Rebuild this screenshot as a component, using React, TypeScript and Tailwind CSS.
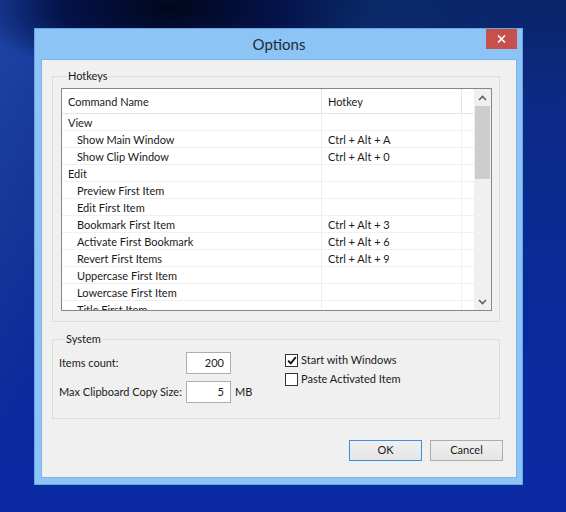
import React from "react";

const ROWS: { name: string; key?: string; group?: boolean }[] = [
  { name: "View", group: true },
  { name: "Show Main Window", key: "Ctrl + Alt + A" },
  { name: "Show Clip Window", key: "Ctrl + Alt + 0" },
  { name: "Edit", group: true },
  { name: "Preview First Item" },
  { name: "Edit First Item" },
  { name: "Bookmark First Item", key: "Ctrl + Alt + 3" },
  { name: "Activate First Bookmark", key: "Ctrl + Alt + 6" },
  { name: "Revert First Items", key: "Ctrl + Alt + 9" },
  { name: "Uppercase First Item" },
  { name: "Lowercase First Item" },
  { name: "Title First Item" },
];

function Chevron({ down }: { down?: boolean }) {
  return (
    <svg width="9" height="6" viewBox="0 0 9 6" className={down ? "rotate-180" : ""}>
      <path d="M1 5 L4.5 1.5 L8 5" fill="none" stroke="#606060" strokeWidth="1.6" />
    </svg>
  );
}

function Checkbox({ checked, label }: { checked?: boolean; label: string }) {
  return (
    <label className="flex items-center gap-[3px] h-[19px]">
      <span className="w-[13px] h-[13px] border border-[#333333] bg-white flex items-center justify-center">
        {checked && (
          <svg width="10" height="9" viewBox="0 0 10 9">
            <path d="M1.2 4.6 L3.8 7.4 L8.8 1.2" fill="none" stroke="#111" strokeWidth="1.9" />
          </svg>
        )}
      </span>
      <span>{label}</span>
    </label>
  );
}

export default function App() {
  return (
    <div
      className="w-[566px] h-[512px] overflow-hidden pt-[28px] pl-[34px] text-[11px] text-[#1a1a1a] bg-[radial-gradient(ellipse_200px_70px_at_170px_8px,#010719_0%,#04124a_55%,transparent_100%),radial-gradient(ellipse_180px_50px_at_340px_10px,#0a2a66_0%,transparent_100%),linear-gradient(120deg,#1d46a6_0%,#16389a_14%,transparent_30%),linear-gradient(180deg,#0a2468_0%,#0c2b88_22%,#0a2a9a_60%,#0b29a2_100%)]"
      style={{ fontFamily: "Lato, 'Noto Sans', sans-serif" }}
    >
      {/* window */}
      <div className="w-[489px] h-[457px] border border-[#69a6e4] bg-[#8cc4f6] flex flex-col pl-[6px] pr-[5px] pb-[6px]">
        <div className="relative h-[30px] flex items-center justify-center">
          <span className="text-[15px] text-[#1e2a38]">Options</span>
          <button className="absolute right-0 top-0 w-[31px] h-[20px] bg-[#c7504c] flex items-center justify-center">
            <svg width="9" height="8" viewBox="0 0 9 8">
              <path d="M1 0.5 L8 7.5 M8 0.5 L1 7.5" stroke="#fff" strokeWidth="1.6" />
            </svg>
          </button>
        </div>

        {/* client area */}
        <div className="flex-1 border border-[#7db4ea] bg-[#f0f0f0] flex flex-col">
          <fieldset className="mt-[9px] ml-[10px] w-[448px] h-[253px] border border-[#dcdcdc] pl-[8px] pt-[5px]">
            <legend className="ml-[6px] px-[1px] leading-[14px]">Hotkeys</legend>
            <div className="w-[431px] h-[223px] border border-[#828790] bg-white flex">
              <div className="flex-1 overflow-hidden">
                <div className="flex h-[25px] border-b border-[#e5e5e5] items-center">
                  <div className="w-[260px] h-full border-r border-[#e5e5e5] pl-[6px] pt-[2px] flex items-center">Command Name</div>
                  <div className="w-[140px] h-full border-r border-[#e5e5e5] pl-[6px] pt-[2px] flex items-center">Hotkey</div>
                  <div className="flex-1" />
                </div>
                {ROWS.map((r) => (
                  <div key={r.name} className="flex h-[17px] border-b border-[#f0f0f0] leading-[18px]">
                    <div className={`w-[260px] border-r border-[#f0f0f0] whitespace-nowrap ${r.group ? "pl-[6px]" : "pl-[15px]"}`}>
                      {r.name}
                    </div>
                    <div className="w-[140px] border-r border-[#f0f0f0] pl-[6px] whitespace-nowrap">{r.key ?? ""}</div>
                    <div className="flex-1" />
                  </div>
                ))}
              </div>
              {/* vertical scrollbar */}
              <div className="w-[17px] bg-[#f0f0f0] flex flex-col">
                <div className="h-[17px] flex items-center justify-center">
                  <Chevron />
                </div>
                <div className="flex-1 flex flex-col px-[1px]">
                  <div className="h-[73px] bg-[#cdcdcd]" />
                </div>
                <div className="h-[17px] flex items-center justify-center">
                  <Chevron down />
                </div>
              </div>
            </div>
          </fieldset>

          <fieldset className="mt-[10px] ml-[10px] w-[448px] h-[87px] border border-[#dcdcdc] pl-[6px] pt-[6px]">
            <legend className="ml-[6px] px-[1px] leading-[14px]">System</legend>
            <div className="flex">
              <div className="w-[226px] grid grid-cols-[127px_45px_auto] gap-y-[7px] items-center">
                <span>Items count:</span>
                <div className="h-[22px] border border-[#abadb3] bg-white text-right pr-[6px] leading-[20px]">200</div>
                <span />
                <span>Max Clipboard Copy Size:</span>
                <div className="h-[22px] border border-[#abadb3] bg-white text-right pr-[6px] leading-[20px]">5</div>
                <span className="pl-[4px]">MB</span>
              </div>
              <div className="flex flex-col mt-[-1px]">
                <Checkbox checked label="Start with Windows" />
                <Checkbox label="Paste Activated Item" />
              </div>
            </div>
          </fieldset>

          <div className="mt-[21px] flex justify-end gap-[8px] pr-[13px]">
            <button className="w-[73px] h-[21px] border border-[#3c8fdd] bg-[linear-gradient(180deg,#f0f0f0,#e5e5e5)]">OK</button>
            <button className="w-[73px] h-[21px] border border-[#acacac] bg-[linear-gradient(180deg,#f0f0f0,#e5e5e5)]">Cancel</button>
          </div>
        </div>
      </div>
    </div>
  );
}
